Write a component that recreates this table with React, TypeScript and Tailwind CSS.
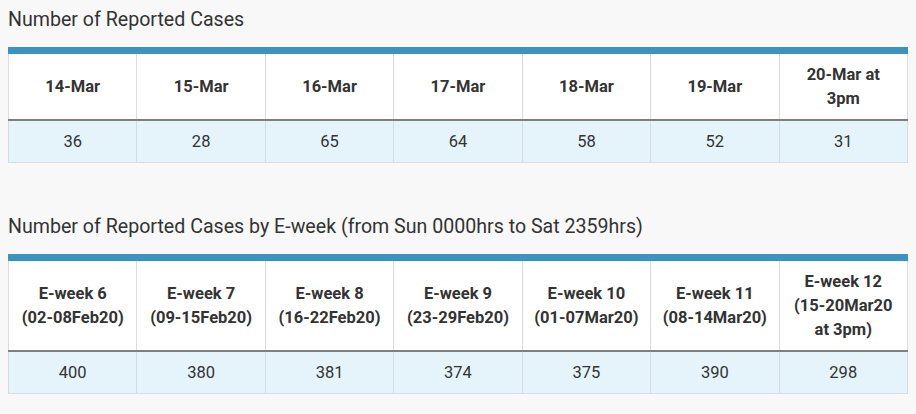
import React from "react";

const t1h = ["14-Mar", "15-Mar", "16-Mar", "17-Mar", "18-Mar", "19-Mar", "20-Mar at 3pm"];
const t1v = ["36", "28", "65", "64", "58", "52", "31"];
const t2h: [string, string][] = [
  ["E-week 6", "(02-08Feb20)"],
  ["E-week 7", "(09-15Feb20)"],
  ["E-week 8", "(16-22Feb20)"],
  ["E-week 9", "(23-29Feb20)"],
  ["E-week 10", "(01-07Mar20)"],
  ["E-week 11", "(08-14Mar20)"],
  ["E-week 12", "(15-20Mar20 at 3pm)"],
];
const t2v = ["400", "380", "381", "374", "375", "390", "298"];

function Table({ head, vals }: { head: React.ReactNode[]; vals: string[] }) {
  return (
    <table className="w-[900px] table-fixed border-collapse border-t-[7px] border-t-[#3d93c0]">
      <thead>
        <tr>
          {head.map((h, i) => (
            <th
              key={i}
              className="whitespace-nowrap border-x border-[#dcdcdc] border-b-2 border-b-[#7f7f7f] bg-white px-1 pt-[8.5px] pb-[8.5px] text-[16.5px] leading-[24px] font-bold text-[#333]"
            >
              {h}
            </th>
          ))}
        </tr>
      </thead>
      <tbody>
        <tr>
          {vals.map((v, i) => (
            <td
              key={i}
              className="border border-t-0 border-[#d4dde2] bg-[#e5f4fb] px-1 pt-[9px] pb-[8px] text-center text-[16.5px] leading-[24px] text-[#333]"
            >
              {v}
            </td>
          ))}
        </tr>
      </tbody>
    </table>
  );
}

export default function App() {
  return (
    <div
      className="min-h-[414px] w-[916px] bg-[#f8f8f9] pl-[8px] pt-[6px]"
      style={{ fontFamily: "Roboto, 'Liberation Sans', sans-serif" }}
    >
      <h2 className="mb-[13px] text-[19.6px] leading-[28px] font-normal text-[#333]">Number of Reported Cases</h2>
      <Table head={t1h.map((h) => (h === "20-Mar at 3pm" ? <>20-Mar at<br />3pm</> : h))} vals={t1v} />
      <h2 className="mt-[50px] mb-[13px] text-[19.6px] leading-[28px] font-normal text-[#333]">
        Number of Reported Cases by E-week (from Sun 0000hrs to Sat 2359hrs)
      </h2>
      <Table
        head={t2h.map(([a, b], i) =>
          i === 6 ? (
            <>
              {a}
              <br />
              (15-20Mar20
              <br />
              at 3pm)
            </>
          ) : (
            <>
              {a}
              <br />
              {b}
            </>
          )
        )}
        vals={t2v}
      />
    </div>
  );
}
